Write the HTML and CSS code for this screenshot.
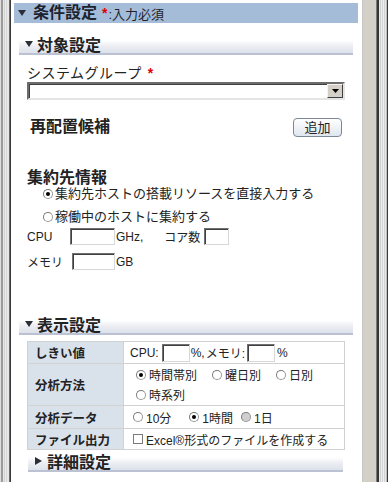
FILE: index.html
```html
<!DOCTYPE html>
<html lang="ja">
<head>
<meta charset="utf-8">
<link rel="stylesheet" href="styles.css">
</head>
<body>
<div class="frame">
  <div class="edge-left"></div>
  <div class="main">
    <div class="panel-head">
      <svg class="tri-down" viewBox="0 0 8 6"><path d="M0 0H8L4 6Z"/></svg>
      <span class="ph-title">条件設定</span><span class="req">*</span><span class="ph-note">:入力必須</span>
    </div>

    <div class="section">
      <div class="sec-head">
        <svg class="tri-down" viewBox="0 0 8 6"><path d="M0 0H8L4 6Z"/></svg>
        <span>対象設定</span>
      </div>
      <div class="sec-body">
        <div class="field-label">システムグループ<span class="req">*</span></div>
        <div class="select"><span class="select-btn"><svg viewBox="0 0 7 4"><path d="M0 0H7L3.5 4Z"/></svg></span></div>
        <div class="row-between">
          <span class="h">再配置候補</span>
          <span class="btn">追加</span>
        </div>
        <div class="h h-target">集約先情報</div>
        <div class="radio-line"><span class="radio checked"></span><span>集約先ホストの搭載リソースを直接入力する</span></div>
        <div class="radio-line second"><span class="radio"></span><span>稼働中のホストに集約する</span></div>
        <div class="input-line cpu">
          <span class="lbl">CPU</span><span class="inp w-cpu"></span><span class="unit">GHz,</span>
          <span class="lbl-core">コア数</span><span class="inp w-core"></span>
        </div>
        <div class="input-line mem">
          <span class="lbl lbl-mem">メモリ</span><span class="inp w-mem"></span><span class="unit">GB</span>
        </div>
      </div>
    </div>

    <div class="section section-display">
      <div class="sec-head">
        <svg class="tri-down" viewBox="0 0 8 6"><path d="M0 0H8L4 6Z"/></svg>
        <span>表示設定</span>
      </div>
      <div class="sec-body2">
        <div class="grid">
          <div class="cell-label r1">しきい値</div>
          <div class="cell-val r1">
            <span class="t-cpu">CPU:</span><span class="inp w-th"></span><span class="pct">%,</span><span class="t-mem">メモリ:</span><span class="inp w-th"></span><span class="pct2">%</span>
          </div>
          <div class="cell-label r2">分析方法</div>
          <div class="cell-val r2 wrap">
            <span class="opt"><span class="radio checked"></span>時間帯別</span>
            <span class="opt"><span class="radio"></span>曜日別</span>
            <span class="opt"><span class="radio"></span>日別</span>
            <span class="opt"><span class="radio"></span>時系列</span>
          </div>
          <div class="cell-label r3">分析データ</div>
          <div class="cell-val r3">
            <span class="opt o10"><span class="radio"></span>10分</span>
            <span class="opt o1h"><span class="radio checked"></span>1時間</span>
            <span class="opt"><span class="radio pressed"></span>1日</span>
          </div>
          <div class="cell-label r4">ファイル出力</div>
          <div class="cell-val r4">
            <span class="opt"><span class="check"></span>Excel®形式のファイルを作成する</span>
          </div>
        </div>
        <div class="sec-head sub">
          <svg class="tri-right" viewBox="0 0 7 8"><path d="M0 0L7 4L0 8Z"/></svg>
          <span>詳細設定</span>
        </div>
      </div>
    </div>
  </div>
  <div class="edge-right"></div>
</div>
</body>
</html>
```

FILE: styles.css
```css
* { box-sizing: border-box; }
html, body { margin: 0; padding: 0; }
body {
  width: 388px;
  height: 482px;
  overflow: hidden;
  background: #fff;
  color: #222;
  font-family: "Liberation Sans", "Noto Sans CJK JP", sans-serif;
  font-size: 13px;
}
.frame { display: flex; height: 482px; }
.edge-left {
  width: 11px; flex: none;
  background: linear-gradient(to right,
    #dedede 0 1px, #9c9c9c 1px 3px, #e6e6e6 3px 4px, #d2d2d2 4px 5px,
    #ebebeb 5px 6px, #d6d6d6 6px 7px, #e8e8e8 7px 9px, #6a6a6a 9px 10px, #3a3a3a 10px 11px);
}
.edge-right {
  width: 26px; flex: none;
  background: linear-gradient(to right,
    #c6c6c6 0 1px, #d4d0c8 1px 14px, #7a7a7a 14px 15px, #353535 15px 17px,
    #e6e6e6 17px 18px, #cfcfcf 18px 19px, #ececec 19px 20px, #d6d6d6 20px 21px,
    #eeeeee 21px 22px, #d2d2d2 22px 23px, #e8e8e8 23px 24px, #bdbdbd 24px 25px, #3a3a3a 25px 26px);
}
.main { width: 351px; flex: none; }

/* top panel header */
.panel-head {
  margin: 3px 4px 0 3px;
  height: 20px;
  background: #a4bcd8;
  display: flex;
  align-items: center;
  padding-left: 4px;
  color: #1c2430;
}
.tri-down { width: 8px; height: 6px; fill: #2b2f38; flex: none; margin-right: 7px; }
.tri-right { width: 7px; height: 8px; fill: #2b2f38; flex: none; margin-right: 5px; }
.ph-title { font-size: 16px; font-weight: 700; line-height: 20px; }
.req { color: #e00000; font-weight: 700; margin-left: 5px; font-size: 14px; }
.ph-note { font-size: 13px; margin-left: 1px; }

/* sections */
.section { margin: 12px 9px 0 8px; }
.section-display { margin-top: 45px; }
.sec-head {
  height: 20px;
  border-bottom: 2px solid #bac2d3;
  background: linear-gradient(#ffffff 0, #ffffff 30%, #eceef3 60%, #dde1ea 100%);
  display: flex;
  align-items: center;
  padding-left: 6px;
  font-size: 16px;
  font-weight: 700;
  color: #222;
}
.sec-head .tri-down { margin-right: 4px; }
.sec-body { padding: 0 8px; }

.field-label {
  margin-top: 9px;
  height: 18px;
  line-height: 18px;
  font-size: 14px;
  letter-spacing: 0.5px;
  display: flex;
  align-items: center;
}
.field-label .req { margin-left: 6px; }

.select {
  height: 18px;
  border-style: solid;
  border-width: 2px;
  border-color: #6d6d6d #e4e4e4 #e4e4e4 #6d6d6d;
  box-shadow: inset 1px 1px 0 #404040;
  background: #fff;
  display: flex;
  justify-content: flex-end;
}
.select-btn {
  width: 16px; height: 14px;
  background: #d4d0c8;
  border-style: solid;
  border-width: 1px;
  border-color: #f4f4f4 #404040 #404040 #f4f4f4;
  display: flex; align-items: center; justify-content: center;
}
.select-btn svg { width: 7px; height: 4px; fill: #000; }

.row-between {
  margin-top: 17px;
  height: 20px;
  display: flex;
  align-items: center;
  justify-content: space-between;
  padding-left: 3px;
  padding-right: 3px;
}
.h { font-size: 16px; font-weight: 700; line-height: 16px; }
.btn {
  width: 49px; height: 19px;
  border: 1px solid #7c8796;
  border-radius: 4px;
  background: linear-gradient(#ffffff, #dfe6ef);
  font-size: 13px;
  line-height: 17px;
  text-align: center;
  color: #222;
}
.h-target { margin-top: 33px; height: 16px; }

.radio-line {
  height: 16px;
  display: flex;
  align-items: center;
  padding-left: 16px;
  font-size: 13px;
  line-height: 16px;
}
.radio-line.second { margin-top: 7px; }
.radio {
  width: 10px; height: 10px;
  border-radius: 50%;
  border: 1px solid #9a9a9a;
  border-top-color: #7a7a7a;
  border-left-color: #7a7a7a;
  background: #fff;
  flex: none;
  margin-right: 2px;
  position: relative;
  display: inline-block;
}
.radio.checked::after {
  content: "";
  position: absolute;
  left: 2px; top: 2px;
  width: 4px; height: 4px;
  border-radius: 50%;
  background: #000;
}
.radio.pressed { background: #cfcfcf; }
.check {
  width: 10px; height: 10px;
  border: 1px solid #7a7a7a;
  background: #fff;
  flex: none;
  margin-right: 3px;
  display: inline-block;
}

.input-line {
  height: 17px;
  display: flex;
  align-items: center;
  font-size: 12px;
}
.input-line.cpu { margin-top: 3px; }
.input-line.mem { margin-top: 8px; }
.lbl { width: 43px; flex: none; }
.lbl-mem { width: 45px; font-size: 12px; }
.inp {
  height: 17px;
  border-style: solid;
  border-width: 1px;
  border-color: #707070 #d8d8d8 #d8d8d8 #707070;
  box-shadow: inset 1px 1px 0 #404040;
  background: #fff;
  flex: none;
}
.w-cpu { width: 45px; }
.w-mem { width: 43px; }
.w-core { width: 25px; }
.unit { margin-left: 1px; }
.lbl-core { margin-left: 21px; width: 40px; }

/* display settings */
.sec-body2 { padding: 0 8px; }
.grid {
  margin-top: 6px;
  display: grid;
  grid-template-columns: 95px 1fr;
  grid-template-rows: 21px 41px 22px 20px;
  gap: 1px;
  padding: 1px;
  background: #d2d2d2;
}
.cell-label {
  background: #d9e1ea;
  font-size: 12.5px;
  font-weight: 700;
  padding-left: 7px;
  display: flex;
  align-items: center;
  color: #222;
}
.cell-val {
  background: #fff;
  display: flex;
  align-items: center;
  padding-left: 9px;
  font-size: 12px;
}
.cell-val.r1 { padding-left: 6px; }
.t-cpu { margin-right: 3px; }
.w-th { width: 28px; height: 18px; }
.pct { margin-left: 1px; width: 15px; }
.t-mem { margin-right: 2px; }
.pct2 { margin-left: 2px; }
.cell-val.wrap {
  flex-wrap: wrap;
  align-content: center;
  padding-left: 12px;
}
.cell-val.wrap .opt { height: 20px; }
.opt {
  display: inline-flex;
  align-items: center;
  margin-right: 15px;
  white-space: nowrap;
}
.opt .radio { margin-right: 3px; }
.o10 { margin-right: 18px; }
.o1h { margin-right: 8px; }

.sec-head.sub {
  margin: 2px 2px 0 1px;
  padding-left: 7px;
}
```
